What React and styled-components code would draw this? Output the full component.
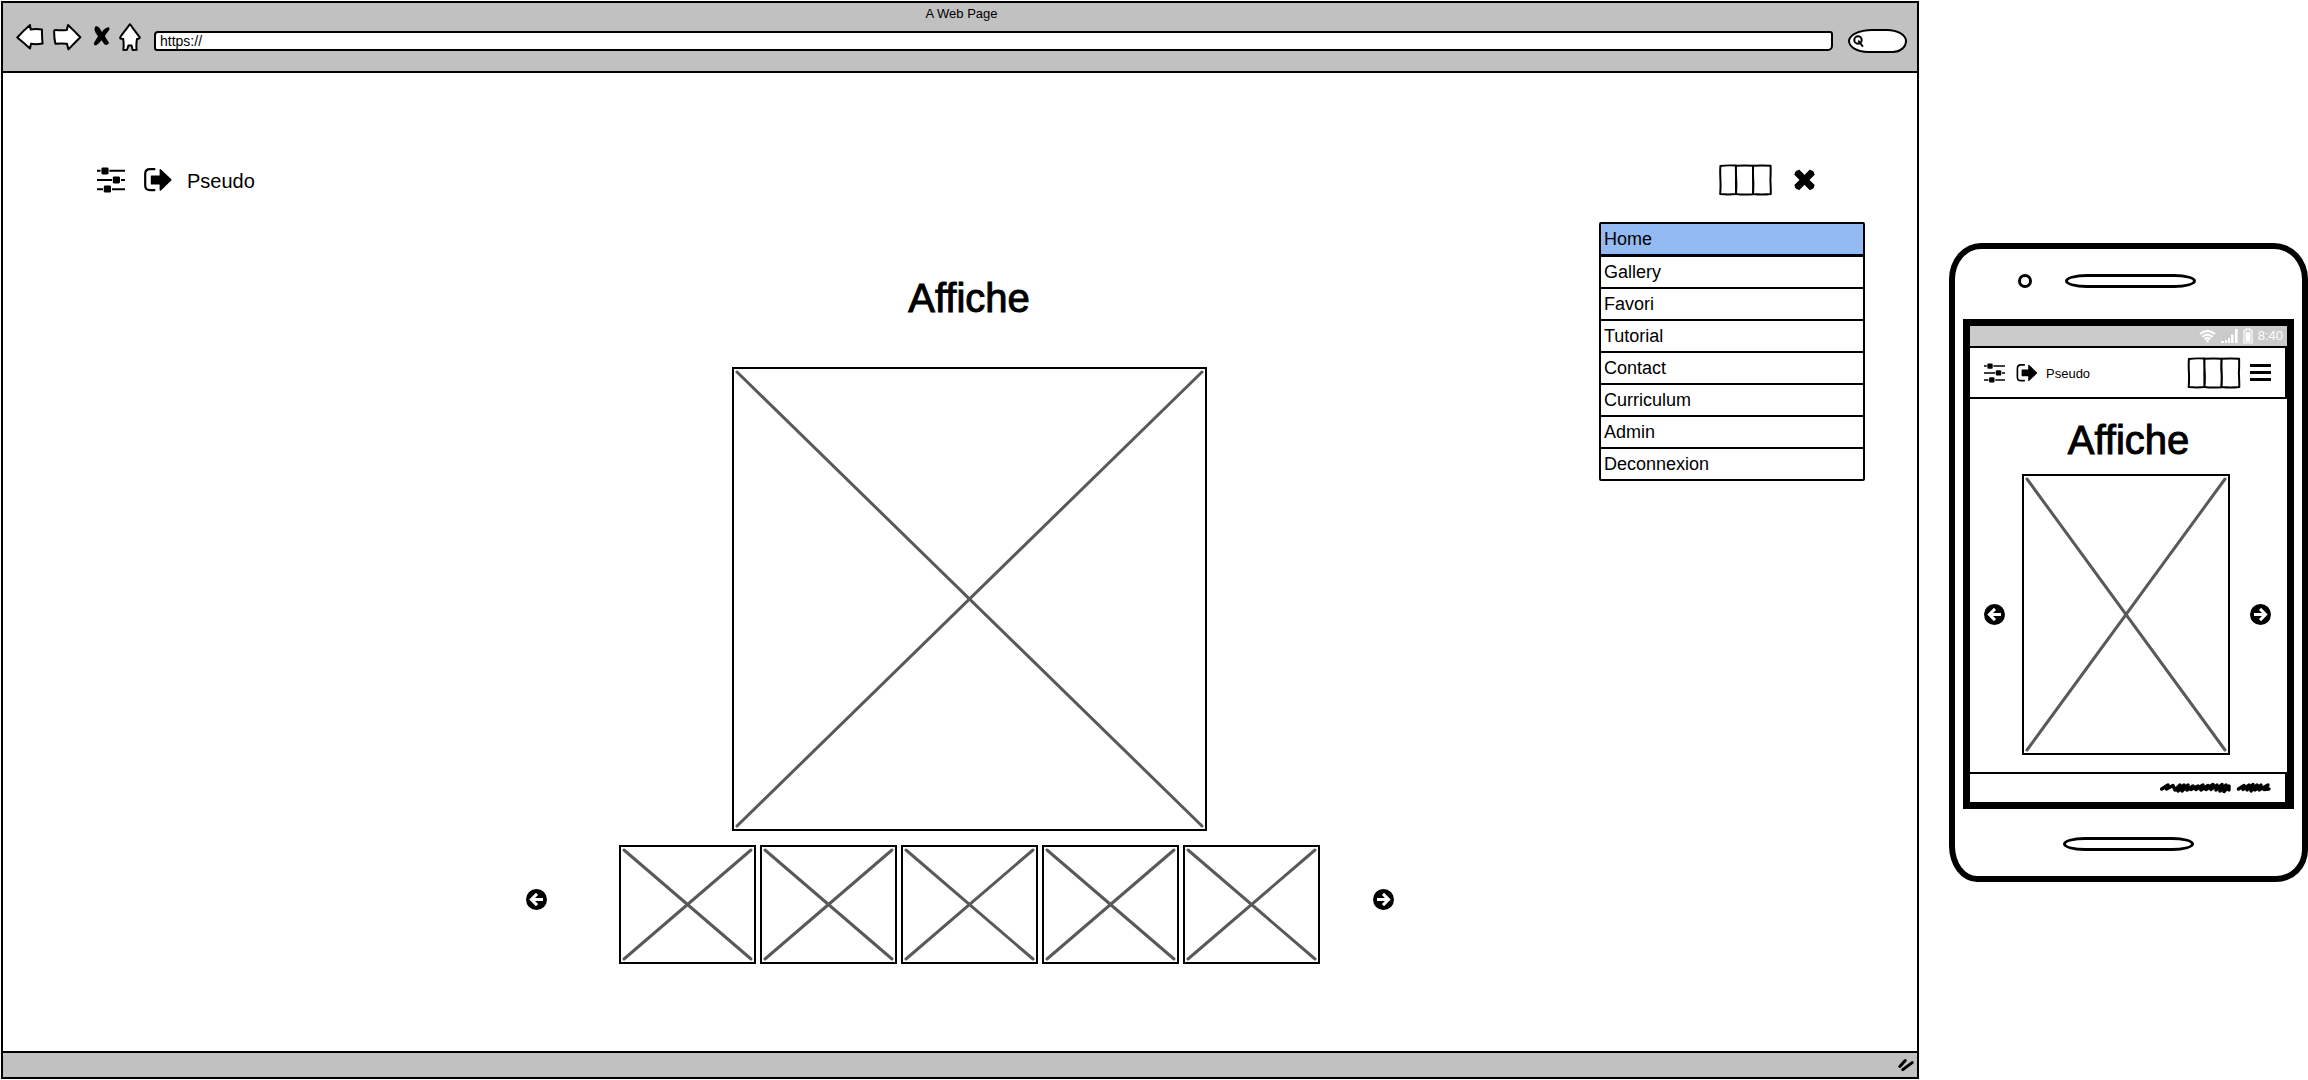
import React from "react";
import styled, { createGlobalStyle } from "styled-components";

const GlobalStyle = createGlobalStyle`
  *, *::before, *::after { box-sizing: border-box; }
  body {
    margin: 0;
    background: #fff;
    color: #000;
    font-family: "Liberation Sans", Arial, sans-serif;
  }
  button, input { font: inherit; color: inherit; }
  svg { display: block; }
`;

const Page = styled.div`
  display: flex;
  align-items: flex-start;
  gap: 30px;
  min-height: 100vh;
  padding: 1px 0 1px 1px;
`;

/* ---------- Browser window ---------- */

const BrowserWindow = styled.section`
  flex: 1;
  min-width: 0;
  align-self: stretch;
  display: flex;
  flex-direction: column;
  border: 2px solid #000;
`;

const Chrome = styled.header`
  background: #c1c1c1;
  border-bottom: 2px solid #000;
  padding: 3px 10px 18px 13px;
`;

const WindowTitle = styled.div`
  font-size: 13px;
  line-height: 16px;
  text-align: center;
`;

const ChromeRow = styled.div`
  display: flex;
  align-items: flex-start;
  gap: 13px;
  height: 31px;
  padding-top: 1px;
`;

const ChromeButtons = styled.nav`
  display: flex;
  gap: 9px;
`;

const IconButton = styled.button`
  flex: none;
  display: block;
  padding: 0;
  border: 0;
  background: none;
  cursor: pointer;
`;

const AddressBar = styled.form`
  flex: 1;
  display: flex;
  align-items: center;
  align-self: flex-end;
  gap: 15px;
`;

const AddressInput = styled.input`
  flex: 1;
  min-width: 0;
  height: 20px;
  padding: 0 4px;
  border: 2px solid #000;
  border-radius: 4px 3px 5px 3px;
  background: #fff;
  font-size: 14px;
  line-height: 16px;
  outline: none;
`;

const SearchBox = styled.label`
  display: flex;
  align-items: center;
  width: 59px;
  height: 24px;
  padding-left: 2px;
  border: 2px solid #000;
  border-radius: 24px 20px 14px 20px / 12px;
  background: #fff;
`;

const SearchInput = styled.input`
  flex: 1;
  min-width: 0;
  padding: 0 4px;
  border: 0;
  background: none;
  font-size: 13px;
  outline: none;
`;

const StatusFooter = styled.footer`
  display: flex;
  justify-content: flex-end;
  align-items: center;
  height: 26px;
  padding-right: 3px;
  border-top: 2px solid #000;
  background: #c1c1c1;
`;

/* ---------- Web page ---------- */

const Site = styled.main`
  flex: 1;
  padding: 91px 0 80px;
`;

const SiteBar = styled.div`
  position: relative;
  display: flex;
  justify-content: space-between;
  align-items: center;
  height: 32px;
  padding: 0 102px 0 94px;
`;

const BarGroup = styled.div`
  display: flex;
  align-items: center;
  gap: ${(p) => p.$gap}px;
`;

const Pseudo = styled.span`
  padding-top: 2px;
  font-size: ${(p) => p.$size}px;
  line-height: 24px;
`;

const Menu = styled.ul`
  position: absolute;
  top: 58px;
  right: 52px;
  width: 266px;
  margin: 0;
  padding: 0;
  list-style: none;
  border: 2px solid #000;
  border-radius: 2px;
  background: #fff;
`;

const MenuItem = styled.li`
  border-bottom: 2px solid #000;
  &:first-child { border-bottom-width: 3px; }
  &:last-child { border-bottom: 0; }
`;

const MenuLink = styled.a`
  display: block;
  padding: 0 3px;
  background: ${(p) => (p.$active ? "#94baf2" : "#fff")};
  color: #000;
  font-size: 18px;
  line-height: 30px;
  text-decoration: none;
`;

const Stage = styled.div`
  display: flex;
  flex-direction: column;
  align-items: center;
  margin-top: 77px;
`;

const Title = styled.h1`
  margin: 0;
  padding: 1px 0 0 ${(p) => p.$inset || 0}px;
  font-size: 40px;
  font-weight: 400;
  line-height: 48px;
  text-align: center;
  -webkit-text-stroke: 1px #000;
`;

const Frame = styled.div`
  border: 2px solid #000;
  padding: 3px;
  background: #fff;
  & > svg { width: 100%; height: 100%; overflow: visible; }
`;

const Poster = styled(Frame)`
  width: 475px;
  height: 464px;
  margin: 45px 0 14px 18px;
`;

const Carousel = styled.div`
  display: flex;
  align-items: center;
  gap: 53px;
  & > button { padding-bottom: 10px; }
`;

const Thumbs = styled.div`
  display: flex;
  gap: 4px;
  padding-left: 19px;
`;

const Thumb = styled(Frame)`
  width: 137px;
  height: 119px;
`;

/* ---------- Phone ---------- */

const Phone = styled.section`
  flex: none;
  width: 359px;
  margin-top: 242px;
  padding: 25px 8px;
  border: 6px solid #000;
  border-radius: 32px 34px 32px 28px / 36px 36px 32px 36px;
  background: #fff;
`;

const PhoneTop = styled.div`
  display: flex;
  align-items: center;
  gap: 33px;
  padding: 0 0 31px 55px;
`;

const Camera = styled.div`
  width: 14px;
  height: 14px;
  border: 3px solid #000;
  border-radius: 50%;
`;

const Speaker = styled.div`
  width: 131px;
  height: 14px;
  border: 3px solid #000;
  border-radius: 22px / 7px;
`;

const PhoneBottom = styled.div`
  display: flex;
  justify-content: center;
  padding-top: 28px;
`;

const Screen = styled.div`
  border: 7px solid #000;
`;

const StatusBar = styled.div`
  display: flex;
  justify-content: flex-end;
  align-items: center;
  gap: 5px;
  height: 20px;
  padding-right: 4px;
  background: #cbcbcb;
  color: #fff;
  font-size: 13px;
  line-height: 20px;
`;

const PhoneHeader = styled.div`
  display: flex;
  justify-content: space-between;
  align-items: center;
  height: 53px;
  padding: 0 14px;
  border: solid #000;
  border-width: 2px 2px 2px 0;
`;

const PhoneBody = styled.div`
  padding: 16px 0 17px;
`;

const PhonePosterRow = styled.div`
  display: flex;
  align-items: center;
  gap: 17px;
  padding: 10px 16px 0 14px;
  & > :last-child { margin-left: 3px; }
`;

const PhonePoster = styled(Frame)`
  flex: 1;
  height: 281px;
`;

const PhoneFooter = styled.div`
  display: flex;
  justify-content: flex-end;
  align-items: center;
  height: 30px;
  padding-right: 14px;
  border: solid #000;
  border-width: 2px 2px 0 0;
`;

/* ---------- Drawings ---------- */

const Cross = () => (
  <svg aria-hidden="true" stroke="#595959" strokeWidth="3" strokeLinecap="round">
    <line x1="0" y1="0" x2="100%" y2="100%" />
    <line x1="100%" y1="0" x2="0" y2="100%" />
  </svg>
);

const outline = { fill: "#fff", stroke: "#000", strokeWidth: 2, strokeLinejoin: "round", strokeLinecap: "round" };

const BackIcon = () => (
  <svg width="28" height="28" viewBox="0 0 28 28" {...outline}>
    <path d="M1.3 14.5Q7 8 14 2L14.6 6.4Q20 5.4 26 6.4Q25.8 13 26.6 20.6Q20 21.6 15 20.8L14 25.5Q8 20 1.3 14.5Z" />
  </svg>
);
const ForwardIcon = () => (
  <svg width="29" height="28" viewBox="0 0 29 28" {...outline}>
    <path d="M1.2 8.3Q1 6.8 3 7Q8 7.6 13.8 7L15 2Q21 7.6 27.3 14.3Q21.6 20 15.4 26.4L14 20.8Q8 20 2.4 20.8Q1 15 1.2 8.3Z" />
  </svg>
);
const StopIcon = () => (
  <svg width="19" height="28" viewBox="0 0 19 28">
    <path d="M4.2 3.6Q7 2.4 8.4 5L11 9Q13.4 4.6 17.6 4.2Q19.4 4.8 17.8 7.4L13.8 13Q16 17 18 19.6Q17.2 23 13.6 21.6L10.4 17.2Q8 21 5 22.4Q1.8 22.4 3.2 19.4L7 13.2Q4 9.6 3.4 6.4Z" />
  </svg>
);
const HomeIcon = () => (
  <svg width="22" height="28" viewBox="0 0 22 28" {...outline}>
    <path d="M11 1.2Q12 2 13.4 4.6L20.8 14.4Q20.6 15.8 18 16Q17 21 17.6 26.8L13.6 27L12.6 22.6H9.4L8 26.8L4.4 27Q5 21 4.2 16L1.2 15.4Q1 14 2.4 12.4Z" />
  </svg>
);
const SearchIcon = () => (
  <svg width="12" height="14" viewBox="0 0 12 14" fill="none" stroke="#000" strokeWidth="2" strokeLinecap="round">
    <circle cx="6" cy="6" r="3.7" />
    <path d="M6.8 7.4L10.4 12" />
  </svg>
);
const GripIcon = () => (
  <svg width="16" height="14" viewBox="0 0 16 14" stroke="#000" strokeWidth="3" strokeLinecap="round">
    <path d="M1.8 8.4L7.2 2.6M4.8 11.6L14.2 4.6" />
  </svg>
);
const SlidersIcon = ({ size }) => (
  <svg width={size} height={size === 28 ? 26 : 20} viewBox="0 0 28 26">
    <path d="M0 2.8h3.6v2H0zM12.4 2.8H28v2H12.4zM0 12h15v2H0zM24 12h4v2h-4zM0 21.2h6v2H0zM15 21.2h13v2H15z" />
    <rect x="4.4" y="0.4" width="7.2" height="7" rx="1.4" />
    <rect x="15.8" y="9.4" width="7.2" height="7" rx="1.4" />
    <rect x="6.8" y="18.6" width="7.2" height="7" rx="1.4" />
  </svg>
);
const LogoutIcon = ({ size }) => (
  <svg width={size} height={size === 32 ? 24 : 18} viewBox="0 0 32 24">
    <path d="M14.4 1.2H10Q5.2 1.2 5.2 6V17.6Q5.2 22.2 10 22.2H14.4" fill="none" stroke="#000" strokeWidth="2.2" strokeLinecap="round" />
    <path d="M11.4 7.4H19.6V1.6Q19.8 .6 21 1.4L31.4 11.2Q31.8 12 31.2 12.6L21 22.4Q19.8 23 19.6 22V16.4H11.4Q10.8 16.2 10.8 15.4V8.4Q10.8 7.6 11.4 7.4Z" />
  </svg>
);
const PanelsIcon = ({ width }) => (
  <svg width={width} height="32" viewBox="0 0 53 32" {...outline}>
    <path d="M1.4 2Q8 1 16.8 1.6Q17.6 8 17 15Q16.8 23 17.2 30Q9 30.8 1.2 30Q1.8 22 1.4 15Q1 8 1.4 2Z" />
    <path d="M17 1.8Q26 1 34.2 1.8Q33.8 9 34.2 16Q34.4 24 34 30.2Q25 31 17 30Q17.6 22 17.2 15Q16.8 8 17 1.8Z" />
    <path d="M34.2 1.8Q43 1 51.6 1.8Q51.8 9 51.4 16Q51.8 24 51.8 30Q43 31 34 30Q34.6 22 34.2 15Q33.8 9 34.2 1.8Z" />
  </svg>
);
const CloseIcon = () => (
  <svg width="21" height="22" viewBox="0 0 21 22" stroke="#000">
    <path d="M2.6 3L18.4 18.8M18.4 3L2.6 18.8" strokeWidth="7" />
    <path d="M4 4.400L17 17.400M17 4.400L4 17.400" strokeWidth="6" strokeLinecap="round" />
  </svg>
);
const BurgerIcon = () => (
  <svg width="21" height="17" viewBox="0 0 21 17">
    <path d="M0 0h21v3H0zM0 7h21v3H0zM0 14h21v3H0z" />
  </svg>
);
const ArrowIcon = ({ right }) => (
  <svg width="21" height="21" viewBox="0 0 21 21">
    <circle cx="10.5" cy="10.5" r="10.5" />
    <path
      d={right ? "M4 10.5H15M10 4.9L15.6 10.5L10 16.1" : "M17 10.5H6M11 4.9L5.4 10.5L11 16.1"}
      fill="none"
      stroke="#fff"
      strokeWidth="3"
    />
  </svg>
);
const WifiIcon = () => (
  <svg width="17" height="14" viewBox="0 0 17 14" fill="none" stroke="#fff" strokeWidth="2.2">
    <path d="M1 5Q8.5 -1.4 16 5M3.4 7.8Q8.5 3.4 13.6 7.8M5.8 10.3Q8.5 8 11.2 10.3" />
    <circle cx="8.5" cy="12.2" r="1.2" fill="#fff" stroke="none" />
  </svg>
);
const SignalIcon = () => (
  <svg width="17" height="14" viewBox="0 0 17 14" fill="#fff">
    <path d="M0 12h3v2H0zM4 11h2v3H4zM7 9h2v5H7zM10 5.5h2.6v8.5H10zM14 0h2.6v14H14z" />
  </svg>
);
const BatteryIcon = () => (
  <svg width="10" height="16" viewBox="0 0 10 16">
    <path d="M3 1h4v1.5h2V15H1V2.5h2z" fill="none" stroke="#fff" strokeWidth="1.2" />
    <rect x="2.6" y="4" width="4.8" height="9.6" fill="#fff" />
  </svg>
);
const Scribble = () => (
  <svg width="111" height="12" viewBox="0 0 111 12" fill="none" stroke="#000" strokeWidth="3.4" strokeLinecap="round" strokeLinejoin="round">
    <path d="M1.7 7L8 3L6.500 7L13 3.500L15 8L20 3L18 9L24 3L22 9L28 3L27 8L33 4L31 7.500L38 4L36 7.500L43 3L41 8L48 3.500L46 7.500L53 2.500L51 7.500L57 3L56 8L62 2.500L60 9L66 3L64 9.500L69 4L69 8" />
    <path d="M78.500 7L84 3.500L83 7.500L89 3L87 8L93 2.500L91 9L97 3L95 8L101 3L99 8L108 3L104 7.500L109 7" />
  </svg>
);

const MENU = ["Home", "Gallery", "Favori", "Tutorial", "Contact", "Curriculum", "Admin", "Deconnexion"];

const Browser = () => (
  <BrowserWindow>
    <Chrome>
      <WindowTitle>A Web Page</WindowTitle>
      <ChromeRow>
        <ChromeButtons>
          <IconButton aria-label="Back"><BackIcon /></IconButton>
          <IconButton aria-label="Forward"><ForwardIcon /></IconButton>
          <IconButton aria-label="Stop"><StopIcon /></IconButton>
          <IconButton aria-label="Start page"><HomeIcon /></IconButton>
        </ChromeButtons>
        <AddressBar>
          <AddressInput aria-label="Address" defaultValue="https://" />
          <SearchBox>
            <SearchIcon />
            <SearchInput aria-label="Search" />
          </SearchBox>
        </AddressBar>
      </ChromeRow>
    </Chrome>
    <Site>
      <SiteBar>
        <BarGroup $gap={15}>
          <IconButton aria-label="Settings"><SlidersIcon size={28} /></IconButton>
          <IconButton aria-label="Log out"><LogoutIcon size={32} /></IconButton>
          <Pseudo $size={20}>Pseudo</Pseudo>
        </BarGroup>
        <BarGroup $gap={22}>
          <PanelsIcon width={53} />
          <IconButton aria-label="Close menu"><CloseIcon /></IconButton>
        </BarGroup>
        <Menu>
          {MENU.map((label, i) => (
            <MenuItem key={label}>
              <MenuLink href="#" $active={i === 0}>{label}</MenuLink>
            </MenuItem>
          ))}
        </Menu>
      </SiteBar>
      <Stage>
        <Title $inset={18}>Affiche</Title>
        <Poster><Cross /></Poster>
        <Carousel>
          <IconButton aria-label="Previous"><ArrowIcon /></IconButton>
          <Thumbs>
            {[1, 2, 3, 4, 5].map((n) => (
              <Thumb key={n}><Cross /></Thumb>
            ))}
          </Thumbs>
          <IconButton aria-label="Next"><ArrowIcon right /></IconButton>
        </Carousel>
      </Stage>
    </Site>
    <StatusFooter><GripIcon /></StatusFooter>
  </BrowserWindow>
);

const Mobile = () => (
  <Phone>
    <PhoneTop>
      <Camera />
      <Speaker />
    </PhoneTop>
    <Screen>
      <StatusBar>
        <WifiIcon />
        <SignalIcon />
        <BatteryIcon />
        <span>8:40</span>
      </StatusBar>
      <PhoneHeader>
        <BarGroup $gap={8}>
          <IconButton aria-label="Settings"><SlidersIcon size={21} /></IconButton>
          <IconButton aria-label="Log out"><LogoutIcon size={25} /></IconButton>
          <Pseudo $size={13}>Pseudo</Pseudo>
        </BarGroup>
        <BarGroup $gap={9}>
          <PanelsIcon width={54} />
          <IconButton aria-label="Open menu"><BurgerIcon /></IconButton>
        </BarGroup>
      </PhoneHeader>
      <PhoneBody>
        <Title>Affiche</Title>
        <PhonePosterRow>
          <IconButton aria-label="Previous"><ArrowIcon /></IconButton>
          <PhonePoster><Cross /></PhonePoster>
          <IconButton aria-label="Next"><ArrowIcon right /></IconButton>
        </PhonePosterRow>
      </PhoneBody>
      <PhoneFooter><Scribble /></PhoneFooter>
    </Screen>
    <PhoneBottom>
      <Speaker />
    </PhoneBottom>
  </Phone>
);

export default function App() {
  return (
    <>
      <GlobalStyle />
      <Page>
        <Browser />
        <Mobile />
      </Page>
    </>
  );
}
